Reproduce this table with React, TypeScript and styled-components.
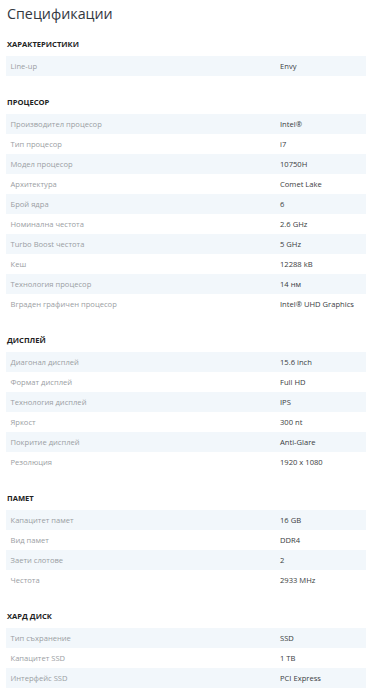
import React from "react";
import styled, { createGlobalStyle } from "styled-components";

const GlobalStyle = createGlobalStyle`
  html, body {
    margin: 0;
    padding: 0;
    background: #ffffff;
  }
  body {
    font-family: "Open Sans", "Noto Sans", Arial, sans-serif;
    -webkit-font-smoothing: antialiased;
  }
`;

type Spec = [string, string];
type Group = { title: string; rows: Spec[] };

const groups: Group[] = [
  { title: "ХАРАКТЕРИСТИКИ", rows: [["Line-up", "Envy"]] },
  {
    title: "ПРОЦЕСОР",
    rows: [
      ["Производител процесор", "Intel®"],
      ["Тип процесор", "i7"],
      ["Модел процесор", "10750H"],
      ["Архитектура", "Comet Lake"],
      ["Брой ядра", "6"],
      ["Номинална честота", "2.6 GHz"],
      ["Turbo Boost честота", "5 GHz"],
      ["Кеш", "12288 kB"],
      ["Технология процесор", "14 нм"],
      ["Вграден графичен процесор", "Intel® UHD Graphics"],
    ],
  },
  {
    title: "ДИСПЛЕЙ",
    rows: [
      ["Диагонал дисплей", "15.6 inch"],
      ["Формат дисплей", "Full HD"],
      ["Технология дисплей", "IPS"],
      ["Яркост", "300 nt"],
      ["Покритие дисплей", "Anti-Glare"],
      ["Резолюция", "1920 x 1080"],
    ],
  },
  {
    title: "ПАМЕТ",
    rows: [
      ["Капацитет памет", "16 GB"],
      ["Вид памет", "DDR4"],
      ["Заети слотове", "2"],
      ["Честота", "2933 MHz"],
    ],
  },
  {
    title: "ХАРД ДИСК",
    rows: [
      ["Тип съхранение", "SSD"],
      ["Капацитет SSD", "1 TB"],
      ["Интерфейс SSD", "PCI Express"],
    ],
  },
];

const Page = styled.div`
  padding: 0 1px 0 6px;
`;

const Title = styled.h1`
  margin: 0;
  padding: 2px 0 0 1px;
  font-size: 14.3px;
  line-height: 24px;
  font-weight: 400;
  color: #33383f;
`;

const Section = styled.section`
  margin-top: 19px;
  &:first-of-type {
    margin-top: 11px;
  }
`;

const SectionTitle = styled.h2`
  margin: 0 0 5px;
  padding-left: 1px;
  font-size: 7.6px;
  line-height: 14px;
  font-weight: 700;
  color: #222;
`;

const Table = styled.div`
  display: flex;
  flex-direction: column;
`;

const Row = styled.div<{ $shaded: boolean }>`
  display: grid;
  grid-template-columns: 274px 1fr;
  height: 20px;
  align-items: center;
  background: ${(p) => (p.$shaded ? "#f2f7fb" : "transparent")};
  font-size: 7.6px;
  line-height: 20px;
`;

const Label = styled.span`
  padding-left: 4.5px;
  color: #9a9ea3;
`;

const Value = styled.span`
  color: #3a3d42;
`;

export default function App() {
  return (
    <Page>
      <GlobalStyle />
      <Title>Спецификации</Title>
      {groups.map((g) => (
        <Section key={g.title}>
          <SectionTitle>{g.title}</SectionTitle>
          <Table>
            {g.rows.map(([k, v], i) => (
              <Row key={k} $shaded={i % 2 === 0}>
                <Label>{k}</Label>
                <Value>{v}</Value>
              </Row>
            ))}
          </Table>
        </Section>
      ))}
    </Page>
  );
}
